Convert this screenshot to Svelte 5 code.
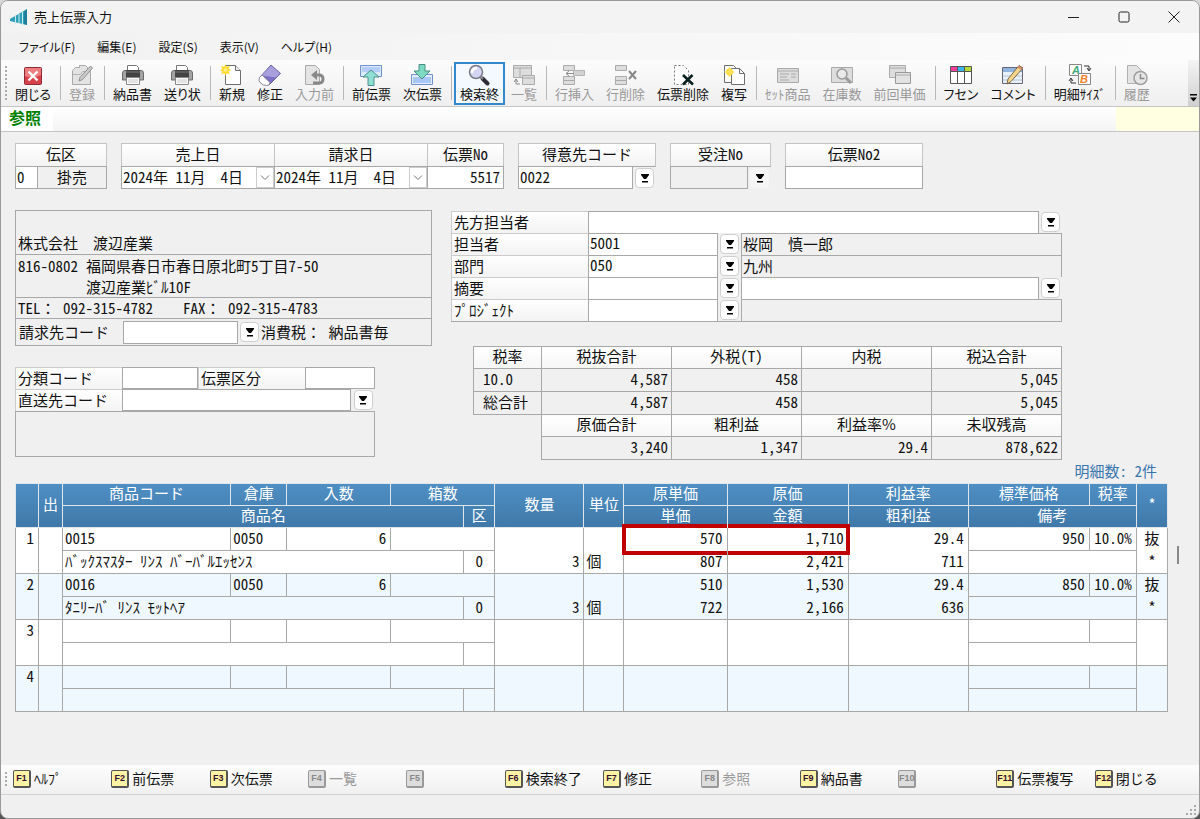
<script>
  const menus = ['ファイル(F)', '編集(E)', '設定(S)', '表示(V)', 'ヘルプ(H)'];

  const toolGroups = [
    [{ icon: 'exit', label: '閉じる' }],
    [{ icon: 'register', label: '登録', off: true }],
    [{ icon: 'printer', label: '納品書' }, { icon: 'printer', label: '送り状' }],
    [
      { icon: 'new', label: '新規' },
      { icon: 'eraser', label: '修正' },
      { icon: 'revert', label: '入力前', off: true },
    ],
    [{ icon: 'prev', label: '前伝票' }, { icon: 'next', label: '次伝票' }],
    [{ icon: 'search', label: '検索終', active: true }, { icon: 'list', label: '一覧', off: true }],
    [
      { icon: 'rowInsert', label: '行挿入', off: true },
      { icon: 'rowDelete', label: '行削除', off: true },
      { icon: 'slipDelete', label: '伝票削除' },
      { icon: 'copy', label: '複写' },
    ],
    [
      { icon: 'set', label: 'ｾｯﾄ商品', off: true },
      { icon: 'stock', label: '在庫数', off: true },
      { icon: 'lastPrice', label: '前回単価', off: true },
    ],
    [{ icon: 'tags', label: 'フセン' }, { icon: 'comment', label: 'コメント' }],
    [{ icon: 'size', label: '明細ｻｲｽﾞ' }],
    [{ icon: 'history', label: '履歴', off: true }],
  ];

  const contacts = [
    { id: 'rep', label: '担当者', code: '5001', name: '桜岡　　慎一郎' },
    { id: 'dept', label: '部門', code: '050', name: '九州' },
    { id: 'memo', label: '摘要', code: '', name: '', editable: true },
    { id: 'project', label: 'ﾌﾟﾛｼﾞｪｸﾄ', code: '', name: '' },
  ];

  const colWidths = [23, 24, 168, 56, 104, 73, 31, 89, 40, 103, 121, 120, 121, 47, 31];

  const lines = [
    {
      code: '0015', store: '0050', per: '6', name: 'ﾊﾞｯｸｽﾏｽﾀｰ ﾘﾝｽ ﾊﾞｰﾊﾞﾙｴｯｾﾝｽ', kbn: '0', qty: '3', unit: '個',
      unitCost: '570', cost: '1,710', price: '807', amount: '2,421', rate: '29.4', profit: '711',
      list: '950', tax: '10.0%', mark: '抜', star: '*', flagged: true,
    },
    {
      code: '0016', store: '0050', per: '6', name: 'ﾀﾆﾘｰﾊﾞ ﾘﾝｽ ﾓｯﾄﾍｱ', kbn: '0', qty: '3', unit: '個',
      unitCost: '510', cost: '1,530', price: '722', amount: '2,166', rate: '29.4', profit: '636',
      list: '850', tax: '10.0%', mark: '抜', star: '*',
    },
    {},
    {},
  ];

  const fnKeys = [
    { label: 'ﾍﾙﾌﾟ' },
    { label: '前伝票' },
    { label: '次伝票' },
    { label: '一覧', off: true },
    { label: '', off: true },
    { label: '検索終了' },
    { label: '修正' },
    { label: '参照', off: true },
    { label: '納品書' },
    { label: '', off: true },
    { label: '伝票複写' },
    { label: '閉じる' },
  ];
</script>

{#snippet icon(name)}
  <svg class="ico" viewBox="0 0 22 22" width="22" height="22" aria-hidden="true">
    {#if name === 'exit'}
      <rect x="2.5" y="3.5" width="17" height="17" rx="1" fill="#d8404a" stroke="#8c2b36" />
      <path d="M3 4h16v7q-8 4-16 1z" fill="#ef7d80" />
      <path d="M6.500 7.500l9 9M15.500 7.500l-9 9" stroke="#fff" stroke-width="2.400" />
    {:else if name === 'register'}
      <path d="M1.500 20.500V6.500l3-3h4v-2h6l2 2v3h3v14z" fill="#e3e3e3" stroke="#a8a8a8" />
      <path d="M1.500 10.500h8l2-3h8" fill="none" stroke="#b4b4b4" />
      <path d="M8 17l1-3.500L19.500 2l2 2L11.500 15.500z" fill="#ccc" stroke="#8e8e8e" />
    {:else if name === 'printer'}
      <path d="M5.500 7V1.500h9l2 2V7" fill="#fff" stroke="#777" />
      <path d="M.5 16V9q0-2.500 2.500-2.500h16q2.500 0 2.500 2.500v7z" fill="#a4a4a4" stroke="#6c6c6c" />
      <path d="M4 6h14v8H4z" fill="#444" />
      <path d="M4 8h14" stroke="#777" />
      <path d="M4.500 13.500h13v7h-13z" fill="#fafafa" stroke="#888" />
      <path d="M6 16h10M6 18h10" stroke="#ccc" />
    {:else if name === 'new'}
      <path d="M4.500 1.500h10l5 5v14h-15z" fill="#fff" stroke="#6f6f6f" />
      <path d="M14.500 1.500v5h5" fill="#eee" stroke="#6f6f6f" />
      <path d="M4.500 0l1.300 3L9 1.700 7.500 5l3 1.300-3 1L9 10.500 5.800 9l-1.300 3-1.300-3L0 10.500l1.500-3L-1 6.300 1.500 5 0 1.700 3.200 3z" fill="#ffd829" />
      <circle cx="4.500" cy="6" r="2" fill="#fff17e" />
    {:else if name === 'eraser'}
      <path d="M.5 13.500L12 1l9.500 8.500L10 21z" fill="#7c70c4" stroke="#67609f" />
      <path d="M2.500 11.500L12 1.500l9 8-4 4z" fill="#a89fdd" />
      <path d="M.5 13.500q-1.500 3 1 5.500t6 2.500l2.500-.5 1-2.500L3 11z" fill="#fff" stroke="#8a8a9a" />
    {:else if name === 'revert'}
      <path d="M2.500 1.500h10l4 4v15h-14z" fill="#e4e4e4" stroke="#aaa" />
      <path d="M12 11h4q4 0 4 4t-4 4h-6" fill="none" stroke="#888" stroke-width="3" />
      <path d="M14 6v10l-6-5z" fill="#888" />
    {:else if name === 'prev'}
      <path d="M.5 1.500h21v11H.5z" fill="#dce9ff" stroke="#7090cc" />
      <path d="M2 3h18v5H2z" fill="#b4ccf8" />
      <path d="M11 6l8 7h-5v8.500H8V13H3z" fill="#8fe0d2" stroke="#4b8f93" />
    {:else if name === 'next'}
      <path d="M.5 10.500h21v10H.5z" fill="#e3edff" stroke="#7090cc" />
      <path d="M2 13h18v6H2z" fill="#a9c6f8" />
      <path d="M8 .5h6V7h5l-8 8-8-8h5z" fill="#7ed9c2" stroke="#4b8f83" />
    {:else if name === 'search'}
      <path d="M14.500 14.500l5 5" stroke="#2e2a3a" stroke-width="4" stroke-linecap="round" />
      <path d="M12 12l3 3" stroke="#888" stroke-width="2" />
      <circle cx="8" cy="8" r="6.500" fill="#d4d4f4" stroke="#7c7c88" stroke-width="1.500" />
      <path d="M4 9q0-5 5-5" fill="none" stroke="#fff" stroke-width="2.500" />
    {:else if name === 'list'}
      <path d="M.5 1.500h18v12H.5z" fill="#ddd" stroke="#aaa" />
      <path d="M1 4h17M7 4v9" stroke="#aaa" />
      <path d="M9.500 11.500h12v9h-12z" fill="#ddd" stroke="#aaa" />
      <path d="M10 14h11" stroke="#aaa" />
      <path d="M3 15v5h4M3 15l-2 3M3 15l2 3" fill="none" stroke="#888" />
    {:else if name === 'rowInsert' || name === 'rowDelete'}
      <path d="M.5 1.500h11v5H.500zM.5 12.500h11v4H.500zM.5 16.500h11v4H.500z" fill="#ddd" stroke="#aaa" />
      {#if name === 'rowInsert'}
        <path d="M10.500 6.500h11v5h-11z" fill="#d2d2d2" stroke="#b4b4b4" />
        <path d="M3 9.500h8M6 7l-3 2.500L6 12" fill="none" stroke="#8c8c8c" />
      {:else}
        <path d="M14 7l7 8M21 7l-7 8" stroke="#888" stroke-width="2" />
      {/if}
    {:else if name === 'slipDelete'}
      <path d="M2.500 1.500h9l5 5v14H2.500z" fill="#fff" stroke="#777" stroke-dasharray="2 2" />
      <path d="M11 11l10 9.500M20.500 11L11 20.500" stroke="#0d2020" stroke-width="2.600" />
    {:else if name === 'copy'}
      <path d="M1.500 1.500h9l3 3v14h-12z" fill="#fff" stroke="#6f6f6f" />
      <path d="M8.500 4.500h8l5 5v11h-13z" fill="#fff" stroke="#6f6f6f" />
      <path d="M16.500 4.500v5h5" fill="none" stroke="#6f6f6f" />
      <circle cx="6.500" cy="8" r="3.400" fill="#ffd829" />
      <path d="M6.500 3v10M1.500 8h10" stroke="#ffe36b" stroke-width="1.500" />
    {:else if name === 'set'}
      <path d="M.5 4.500h21v14H.500z" fill="#ddd" stroke="#aaa" />
      <path d="M1 7h20M3 10h9M3 13h7M3 16h9M14 10h5M14 13h5" stroke="#aaa" />
    {:else if name === 'stock'}
      <path d="M.5 3.500h21v15H.500z" fill="#ddd" stroke="#aaa" />
      <circle cx="11" cy="10" r="5" fill="#e9e9e9" stroke="#999" stroke-width="1.500" />
      <path d="M15 14l5 5" stroke="#999" stroke-width="3" />
    {:else if name === 'lastPrice'}
      <path d="M.5 1.500h16v12H.500z" fill="#ddd" stroke="#aaa" />
      <path d="M1 4h15" stroke="#aaa" />
      <path d="M6.500 8.500h15v11h-15z" fill="#e2e2e2" stroke="#999" />
      <path d="M7 11h14" stroke="#aaa" />
    {:else if name === 'tags'}
      <path d="M.5 2.500h21v17H.500z" fill="#fff" stroke="#555" />
      <path d="M1 3h6v4H1z" fill="#ee3f9b" />
      <path d="M8 3h6v4H8z" fill="#39b8ee" />
      <path d="M15 3h6v4h-6z" fill="#b6dc3c" />
      <path d="M7.500 3v17M14.500 3v17M1 7.500h20" stroke="#555" />
    {:else if name === 'comment'}
      <path d="M.5 3.500h20v16H.500z" fill="#e8f0fa" stroke="#667" />
      <path d="M1 4h19v4H1z" fill="#8fb4e0" />
      <path d="M1 12h19M1 16h19" stroke="#b9c6d6" />
      <path d="M5 20l1-5L17 1.500l4 2.500L9 17.500z" fill="#f4d58e" stroke="#7b6543" />
      <path d="M17 1.500l4 2.500-1.500 2-4-2.500z" fill="#c98a6a" />
    {:else if name === 'size'}
      <path d="M.5.500h12v11H.500z" fill="#fff" stroke="#888" />
      <text x="3" y="10" class="glyph ga">A</text>
      <path d="M9.500 9.500h12v11h-12z" fill="#fff" stroke="#888" />
      <text x="11" y="19" class="glyph gb">B</text>
      <path d="M15 2h5v4M18 4l2 3 2-3M7 19H2v-4M0 17l2-3 2 3" fill="none" stroke="#333" />
    {:else if name === 'history'}
      <path d="M1.500 1.500h9l5 5v13h-14z" fill="#e4e4e4" stroke="#b0b0b0" />
      <circle cx="14.500" cy="14" r="6.500" fill="#e6e6e6" stroke="#a0a0a0" stroke-width="1.500" />
      <path d="M14.500 10v4.500h4" fill="none" stroke="#888" stroke-width="1.500" />
    {/if}
  </svg>
{/snippet}

{#snippet lookup(label, flat = false)}
  <button class="lookup" class:flat aria-label={label}>
    <svg viewBox="0 0 8 9" width="8" height="9" aria-hidden="true">
      <path d="M0 0h8v1L5 5H3L0 1z" />
      <path d="M1 7h6v1.500H1z" />
    </svg>
  </button>
{/snippet}

{#snippet dateBox(id, label)}
  <div class="date">
    <input {id} value="2024年 11月　　4日" />
    <button aria-label={label}>
      <svg viewBox="0 0 10 6" width="10" height="6" aria-hidden="true">
        <path d="M1 .5l4 4 4-4" fill="none" stroke="#777" />
      </svg>
    </button>
  </div>
{/snippet}

<div class="window">
  <header class="titlebar">
    <svg viewBox="0 0 18 18" width="18" height="18" aria-hidden="true">
      <path d="M17 1v16L0 13v-2z" fill="#2f9fb8" />
      <path d="M17 1v16l-3-1V4z" fill="#1e7f9c" />
      <path d="M12.500 4v13M9 6v10M5.500 8v8" stroke="#c6edf2" />
    </svg>
    <h1>売上伝票入力</h1>
    <div class="winbtns">
      <button aria-label="最小化"><svg viewBox="0 0 12 12" width="12" height="12"><path d="M0 6.500h11" /></svg></button>
      <button aria-label="最大化"><svg viewBox="0 0 12 12" width="12" height="12"><rect x="1" y="1" width="10" height="10" rx="1.500" /></svg></button>
      <button aria-label="閉じる"><svg viewBox="0 0 12 12" width="12" height="12"><path d="M.5.500l11 11M11.500.500l-11 11" /></svg></button>
    </div>
  </header>

  <nav class="menubar">
    {#each menus as menu}
      <button>{menu}</button>
    {/each}
  </nav>

  <div class="toolbar">
    <span class="grip"></span>
    {#each toolGroups as group, i}
      {#if i > 0}<span class="sep"></span>{/if}
      {#each group as tool}
        <button class="tool" class:active={tool.active} disabled={tool.off}>
          {@render icon(tool.icon)}
          <span>{tool.label}</span>
        </button>
      {/each}
    {/each}
    <button class="overflow" aria-label="その他">
      <svg viewBox="0 0 7 8" width="7" height="8" aria-hidden="true"><path d="M0 0h7v1.500H0zM0 3.500h7L3.500 7.500z" /></svg>
    </button>
  </div>

  <div class="modebar">
    <strong>参照</strong>
    <span class="notice"></span>
  </div>

  <main>
    <section class="slip">
      <div class="group">
        <div class="field w-kbn">
          <label for="kbn">伝区</label>
          <div class="cells"><input id="kbn" class="w-one" value="0" /><output class="box center">掛売</output></div>
        </div>
      </div>
      <div class="group">
        <div class="field w-date"><label for="sales-date">売上日</label>{@render dateBox('sales-date', '売上日を選択')}</div>
        <div class="field w-date"><label for="bill-date">請求日</label>{@render dateBox('bill-date', '請求日を選択')}</div>
        <div class="field w-no"><label for="slip-no">伝票No</label><input id="slip-no" class="num" value="5517" /></div>
      </div>
      <div class="group">
        <div class="field w-code">
          <label for="customer">得意先コード</label>
          <div class="cells"><input id="customer" value="0022" />{@render lookup('得意先を検索')}</div>
        </div>
      </div>
      <div class="group">
        <div class="field w-order">
          <label for="order">受注No</label>
          <div class="cells"><input id="order" disabled />{@render lookup('受注を検索', true)}</div>
        </div>
      </div>
      <div class="group">
        <div class="field w-code"><label for="slip-no2">伝票No2</label><input id="slip-no2" /></div>
      </div>
    </section>

    <section class="info">
      <div class="left">
        <div class="company">
          <p class="cname">株式会社　　渡辺産業</p>
          <p class="addr"><span>816-0802</span><span>福岡県春日市春日原北町5丁目7-50<br />渡辺産業ﾋﾞﾙ10F</span></p>
          <p class="tel"><span>TEL<i>：</i> 092-315-4782</span><span>FAX<i>：</i> 092-315-4783</span></p>
          <div class="bill">
            <label for="bill-to">請求先コード</label>
            <input id="bill-to" />
            {@render lookup('請求先を検索')}
            <span>消費税<i>：</i> 納品書毎</span>
          </div>
        </div>

        <div class="class">
          <label for="class-code">分類コード</label>
          <input id="class-code" />
          <label for="slip-class">伝票区分</label>
          <input id="slip-class" />
          <label for="ship-to">直送先コード</label>
          <input id="ship-to" class="ship" />
          {@render lookup('直送先を検索')}
          <output class="shipname" for="ship-to"></output>
        </div>
      </div>

      <div class="right">
        <div class="contact">
          <label for="person">先方担当者</label>
          <input id="person" class="long" />
          {@render lookup('先方担当者を検索')}
          {#each contacts as c}
            <label for={c.id}>{c.label}</label>
            <input id={c.id} value={c.code} />
            {@render lookup(c.label + 'を検索')}
            {#if c.editable}
              <input aria-label={c.label} value={c.name} />
              {@render lookup(c.label + '名を検索')}
            {:else}
              <output class="box cwide" for={c.id}>{c.name}</output>
            {/if}
          {/each}
        </div>

        <table class="totals">
          <colgroup><col class="c-rate" /><col /><col /><col /><col /></colgroup>
          <tbody>
            <tr><th>税率</th><th>税抜合計</th><th>外税(T)</th><th>内税</th><th>税込合計</th></tr>
            <tr><td class="name">10.0</td><td>4,587</td><td>458</td><td></td><td>5,045</td></tr>
            <tr><td class="name">総合計</td><td>4,587</td><td>458</td><td></td><td>5,045</td></tr>
            <tr><td class="void" rowspan="2"></td><th>原価合計</th><th>粗利益</th><th>利益率<i>%</i></th><th>未収残高</th></tr>
            <tr><td>3,240</td><td>1,347</td><td>29.4</td><td>878,622</td></tr>
          </tbody>
        </table>
      </div>
    </section>

    <p class="count">明細数： 2件</p>

    <section class="detail">
      <table class="lines">
        <colgroup>
          {#each colWidths as w}<col style:width="{w}px" />{/each}
        </colgroup>
        <thead>
          <tr>
            <th rowspan="2"></th>
            <th rowspan="2">出</th>
            <th>商品コード</th>
            <th>倉庫</th>
            <th>入数</th>
            <th colspan="2">箱数</th>
            <th rowspan="2">数量</th>
            <th rowspan="2">単位</th>
            <th>原単価</th>
            <th>原価</th>
            <th>利益率</th>
            <th>標準価格</th>
            <th>税率</th>
            <th rowspan="2">*</th>
          </tr>
          <tr>
            <th colspan="4">商品名</th>
            <th>区</th>
            <th>単価</th>
            <th>金額</th>
            <th>粗利益</th>
            <th colspan="2">備考</th>
          </tr>
        </thead>
        {#each lines as line, i}
          <tbody>
            <tr>
              <td rowspan="2" class="num top">{i + 1}</td>
              <td rowspan="2"></td>
              <td>{line.code}</td>
              <td>{line.store}</td>
              <td class="num">{line.per}</td>
              <td colspan="2"></td>
              <td rowspan="2" class="num bottom">{line.qty}</td>
              <td rowspan="2" class="bottom">{line.unit}</td>
              <td class="num open" class:mark-start={line.flagged}>{line.unitCost}</td>
              <td class="num open" class:mark-end={line.flagged}>{line.cost}</td>
              <td class="num open">{line.rate}</td>
              <td class="num">{line.list}</td>
              <td class="num">{line.tax}</td>
              <td class="center open">{line.mark}</td>
            </tr>
            <tr>
              <td colspan="4">{line.name}</td>
              <td class="center">{line.kbn}</td>
              <td class="num">{line.price}</td>
              <td class="num">{line.amount}</td>
              <td class="num">{line.profit}</td>
              <td colspan="2"></td>
              <td class="center">{line.star}</td>
            </tr>
          </tbody>
        {/each}
      </table>
      <span class="thumb"></span>
    </section>
  </main>

  <nav class="fnbar">
    <span class="grip"></span>
    {#each fnKeys as fn, i}
      <button disabled={fn.off}><kbd>F{i + 1}</kbd><span>{fn.label}</span></button>
    {/each}
  </nav>

  <footer>
    <svg viewBox="0 0 12 12" width="12" height="12" aria-hidden="true">
      <path d="M9 1h2v2H9zM5 5h2v2H5zM9 5h2v2H9zM1 9h2v2H1zM5 9h2v2H5zM9 9h2v2H9z" fill="#aaa" />
    </svg>
  </footer>
</div>

<style>
  :global(body) {
    background: linear-gradient(#d8d8d8 30%, #555 40%);
  }

  .window {
    --line: #a8a8a8;
    --head: linear-gradient(#fff, #f3f3f3);
    --bg: #f0f0f0;
    box-sizing: border-box;
    display: flex;
    flex-direction: column;
    min-height: 100vh;
    border: 1px solid #999;
    border-radius: 8px;
    overflow: hidden;
    background: var(--bg);
    color: #111;
    font: 15px/22px 'Noto Sans CJK JP', sans-serif;
    font-feature-settings: 'hwid';
  }

  *, *::before, *::after { box-sizing: border-box; }

  button, input {
    margin: 0;
    padding: 0;
    border: none;
    border-radius: 0;
    background: transparent;
    color: inherit;
    font: inherit;
    font-feature-settings: inherit;
    min-width: 0;
  }

  /* full-width punctuation inside half-width text */
  i { font-style: normal; font-feature-settings: normal; }

  .titlebar {
    display: flex;
    align-items: center;
    height: 32px;
    padding-left: 9px;
    background: #f3f3f3;
  }

  h1 {
    margin: 0 auto 0 6px;
    font-size: 13px;
    font-weight: 400;
  }

  .winbtns { display: flex; }
  .winbtns button { width: 50px; height: 32px; }
  .winbtns svg { display: block; margin: auto; fill: none; stroke: #222; }

  .menubar {
    display: flex;
    gap: 22px;
    height: 27px;
    padding-left: 18px;
    background: linear-gradient(90deg, #f1f1f1, #fcfcfc);
    font-size: 12px;
    font-feature-settings: 'palt';
  }

  .toolbar {
    display: flex;
    align-items: center;
    height: 47px;
    padding-left: 4px;
    border-bottom: 1px solid #c4c4c4;
    background: linear-gradient(#fcfcfc, #efefef);
    font-size: 13px;
    line-height: 16px;
    font-feature-settings: 'palt';
  }

  .grip {
    flex: none;
    width: 2px;
    height: 34px;
    background: repeating-linear-gradient(#aaa 0 2px, transparent 2px 4px);
  }

  .toolbar .grip { margin-right: 2px; }

  .sep {
    flex: none;
    width: 1px;
    height: 34px;
    margin: 0 2px 0 3px;
    background: #b8b8b8;
  }

  .tool {
    display: flex;
    flex-direction: column;
    align-items: center;
    height: 43px;
    padding: 1px 5px;
    border: 1px solid transparent;
    white-space: nowrap;
  }

  .tool:disabled { color: #999; }
  .tool.active { border: 2px solid #3388cc; padding: 0 4px; background: #f3f9fe; }
  .ico { flex: none; overflow: visible; }
  .glyph { font: italic bold 11px 'Liberation Sans', sans-serif; }
  .ga { fill: #3daa78; }
  .gb { fill: #f08030; }

  .overflow {
    display: flex;
    align-items: flex-end;
    align-self: stretch;
    justify-content: center;
    width: 11px;
    margin-left: auto;
    padding-bottom: 4px;
    background: linear-gradient(#f4f4f4, #cfcfcf);
  }

  .modebar {
    display: flex;
    justify-content: space-between;
    height: 25px;
    border-bottom: 1px solid #c4c4c4;
    background: linear-gradient(#fff, #f4f4f4);
  }

  .modebar strong {
    width: 52px;
    padding-left: 8px;
    background: #fff;
    color: #008000;
    font-size: 16px;
    line-height: 20px;
  }

  .notice { width: 83px; background: #ffffe1; }

  main {
    flex: 1;
    padding: 11px 0 24px 14px;
  }

  label { white-space: nowrap; }

  input, .box {
    display: block;
    padding: 0 1px;
    border: 1px solid var(--line);
    background: #fff;
  }

  input { padding-bottom: 3px; }
  input:disabled, .box { background: var(--bg); }
  .num { text-align: right; }
  .center { text-align: center; }

  .slip { display: flex; gap: 14px; }
  .group { display: flex; }

  .field {
    display: flex;
    flex-direction: column;
    margin-right: -1px;
  }

  .group .field:last-child { margin-right: 0; }
  .field label {
    height: 24px;
    border: 1px solid #c4c4c4;
    border-bottom-color: var(--line);
    background: var(--head);
    line-height: 19px;
    text-align: center;
  }

  .field input, .field .box { height: 23px; margin-top: -1px; line-height: 19px; }
  .field .num { padding-right: 3px; }
  .w-kbn { width: 92px; }
  .w-date { width: 154px; }
  .w-no { width: 77px; }
  .w-code { width: 138px; }
  .w-order { width: 101px; }
  .cells { display: flex; }
  .cells input { flex: 1; }
  .cells .w-one { flex: none; width: 23px; }
  .cells .box { flex: 1; margin-left: -1px; }

  .date {
    display: flex;
    height: 23px;
    margin-top: -1px;
    border: 1px solid var(--line);
    background: #fff;
  }

  .field .date input { flex: 1; height: 21px; margin: 0; border: none; }
  .date button { width: 18px; border: 1px solid #ccc; }
  .date svg { display: block; margin: auto; }

  .lookup {
    flex: none;
    align-self: center;
    justify-self: center;
    width: 19px;
    height: 20px;
    margin: 0 2px;
    border: 1px solid #cfcfcf;
    border-radius: 4px;
    background: #fff;
  }

  .lookup.flat { border-color: #f6f6f6; background: #f6f6f6; }
  .lookup svg { display: block; margin: auto; }

  .info {
    display: flex;
    gap: 19px;
    margin-top: 21px;
  }

  .left { flex: none; width: 417px; }

  .company { border: 1px solid var(--line); white-space: nowrap; }

  .company p {
    margin: 0;
    padding: 0 2px;
    border-bottom: 1px solid var(--line);
  }

  .company .cname { padding-top: 21px; }
  .addr { display: flex; gap: 8px; line-height: 21px; }
  .tel { display: flex; gap: 30px; line-height: 20px; }

  .bill {
    display: flex;
    align-items: center;
    height: 26px;
    padding-left: 3px;
  }

  .bill label { width: 104px; }
  .bill input { width: 115px; height: 23px; }

  .class {
    display: grid;
    grid-template-columns: 107px 76px 107px 46px 24px;
    grid-template-rows: 22px 22px 46px;
    width: 360px;
    margin-top: 21px;
  }

  .class label, .contact label {
    padding-left: 2px;
    border: 1px solid #ccc;
    border-width: 1px 0 0 1px;
    background: var(--head);
    line-height: 20px;
  }

  .class input { width: 100%; }
  #slip-class { grid-column: span 2; }
  .ship { grid-column: span 3; }
  .shipname { grid-column: 1 / -1; border: 1px solid var(--line); }

  .right {
    display: flex;
    flex-direction: column;
    align-items: flex-end;
    gap: 24px;
    width: 611px;
    padding-top: 1px;
  }

  .contact {
    display: grid;
    grid-template-columns: 137px 130px 23px 1fr 23px;
    grid-auto-rows: 22px;
    width: 100%;
    border-bottom: 1px solid var(--line);
  }

  .contact input, .contact .box { border-bottom: none; line-height: 20px; }
  .contact .long { grid-column: span 3; }
  .cwide { grid-column: span 2; }

  table {
    border-collapse: collapse;
    table-layout: fixed;
  }

  td, th {
    padding: 0 3px 3px;
    border: 1px solid var(--line);
    font-weight: 400;
    white-space: nowrap;
  }

  .totals { width: 589px; line-height: 18px; }
  .totals .c-rate { width: 68px; }
  .totals th { background: linear-gradient(#fff, #f6f6f6); }
  .totals td { height: 23px; text-align: right; }
  .totals .name { padding-left: 9px; text-align: left; }
  .totals .void { border: none; }

  .count {
    margin: 0 42px 2px 0;
    color: #3a76ad;
    line-height: 21px;
    text-align: right;
  }

  .detail {
    display: flex;
    gap: 9px;
    padding-right: 20px;
  }

  .lines { flex: 1; width: 100%; line-height: 19px; }
  .lines tr { height: 23px; }
  .lines thead { background: linear-gradient(#4f8fc4, #3f78a8); color: #fff; }
  .lines th { padding: 0 0 3px; border-color: #dfe6ec; line-height: 18px; }
  .lines thead tr { height: 22px; }
  .lines tbody { background: #fff; }
  .lines tbody:nth-of-type(even) { background: #f0f8ff; }
  .lines td { height: 23px; padding: 0 2px 3px; }
  .lines td.num { padding-right: 4px; }
  .lines .top { vertical-align: top; }
  .lines .bottom { vertical-align: bottom; }
  .lines .open { border-bottom: none; }
  .lines tr + tr td { border-top-style: hidden; }
  .lines tr + tr td:nth-child(1),
  .lines tr + tr td:nth-child(2),
  .lines tr + tr td:nth-last-child(2) { border-top-style: solid; }

  /* frame drawn across the two cost cells */
  .mark-start, .mark-end { position: relative; }
  .mark-start::after, .mark-end::after {
    content: '';
    position: absolute;
    inset: -4px -2px -4px 0;
    border: solid #c00000;
    border-width: 4px 4px 4px 0;
  }
  .mark-start::after { inset: -4px 0 -4px -2px; border-width: 4px 0 4px 4px; }

  .thumb {
    flex: none;
    align-self: flex-start;
    width: 2px;
    height: 18px;
    margin-top: 63px;
    background: #888;
  }

  .fnbar {
    position: relative;
    display: grid;
    grid-template-columns: repeat(12, 1fr);
    align-items: center;
    height: 30px;
    padding: 0 6px 2px 12px;
    border-bottom: 1px solid #d2d2d2;
    background: linear-gradient(#fdfdfd, #f0f0f0);
    font-size: 14px;
  }

  .fnbar .grip { position: absolute; left: 4px; height: 16px; }

  .fnbar button {
    display: flex;
    gap: 3px;
    line-height: 16px;
    white-space: nowrap;
  }

  .fnbar button:disabled { color: #999; }

  kbd {
    width: 18px;
    height: 18px;
    border: 1px solid #555;
    border-width: 1px 2px 2px 1px;
    border-radius: 2px;
    background: #fdf3a4;
    color: #3a1030;
    font: bold 9px/15px 'Liberation Sans', sans-serif;
    text-align: center;
  }

  :disabled kbd { border-color: #999; background: #ddd; color: #888; }

  footer {
    display: flex;
    align-items: flex-end;
    justify-content: flex-end;
    height: 23px;
    padding: 2px;
  }
</style>
